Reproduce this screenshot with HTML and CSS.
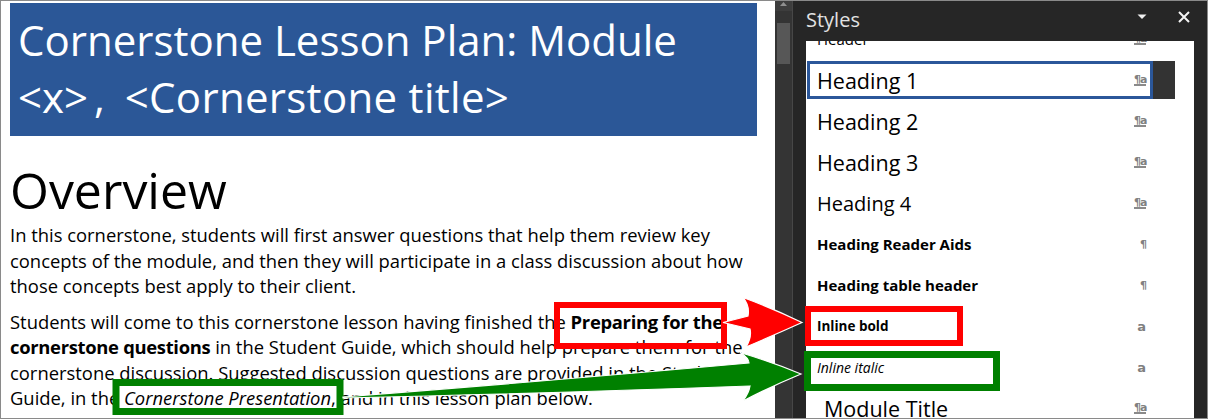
FILE: index.html
```html
<!DOCTYPE html>
<html lang="en">
<head>
<meta charset="utf-8">
<title>Styles</title>
<link rel="stylesheet" href="styles.css">
</head>
<body>
<div class="frame">
  <main class="doc">
    <div class="banner">
      <h1 class="title">Cornerstone Lesson Plan: Module<br><span class="ph-x">&lt;x&gt;</span>, <span class="ph-t">&lt;Cornerstone title&gt;</span></h1>
    </div>
    <h2 class="overview">Overview</h2>
    <p class="para">In this cornerstone, students will first answer questions that help them review key<br>concepts of the module, and then they will participate in a class discussion about how<br>those concepts best apply to their client.</p>
    <p class="para">Students will come to this cornerstone lesson having finished the <strong>Preparing for the</strong><br><strong>cornerstone questions</strong> in the Student Guide, which should help prepare them for the<br>cornerstone discussion. Suggested discussion questions are provided in the Student<br>Guide, in the <em>Cornerstone Presentation</em>, and in this lesson plan below.</p>
  </main>

  <div class="vscroll">
    <div class="vs-up"><svg class="vs-arrow" width="7" height="4" viewBox="0 0 7 4"><polygon points="3.5,0 7,4 0,4"/></svg></div>
    <div class="vs-thumb"></div>
  </div>

  <aside class="pane">
    <header class="pane-head">
      <span class="pane-title">Styles</span>
      <svg class="caret" width="10" height="6" viewBox="0 0 10 6"><polygon points="0.5,0.5 9.5,0.5 5,5"/></svg>
      <svg class="close" width="12" height="12" viewBox="0 0 12 12"><path d="M1 1 L11 11 M11 1 L1 11"/></svg>
    </header>
    <div class="pane-body">
      <ul class="styles">
        <li class="row"><div class="item"><span class="name s-header">Header</span><span class="ico pa">¶a</span></div><div class="drop"></div></li>
        <li class="row sel"><div class="item"><span class="name s-h1">Heading 1</span><span class="ico pa">¶a</span></div><div class="drop"></div></li>
        <li class="row"><div class="item"><span class="name s-h1">Heading 2</span><span class="ico pa">¶a</span></div><div class="drop"></div></li>
        <li class="row"><div class="item"><span class="name s-h1">Heading 3</span><span class="ico pa">¶a</span></div><div class="drop"></div></li>
        <li class="row"><div class="item"><span class="name s-h4">Heading 4</span><span class="ico pa">¶a</span></div><div class="drop"></div></li>
        <li class="row"><div class="item"><span class="name s-bold">Heading Reader Aids</span><span class="ico p">¶</span></div><div class="drop"></div></li>
        <li class="row"><div class="item"><span class="name s-bold">Heading table header</span><span class="ico p">¶</span></div><div class="drop"></div></li>
        <li class="row"><div class="item"><span class="name s-ib">Inline bold</span><span class="ico a">a</span></div><div class="drop"></div></li>
        <li class="row"><div class="item"><span class="name s-ii">Inline italic</span><span class="ico a">a</span></div><div class="drop"></div></li>
        <li class="row"><div class="item"><span class="name s-mt">Module Title</span><span class="ico pa">¶a</span></div><div class="drop"></div></li>
      </ul>
    </div>
  </aside>

  <svg class="annot" width="1208" height="419" viewBox="0 0 1208 419">
    <rect class="box-red" x="557" y="305" width="167" height="41"/>
    <rect class="box-red" x="808" y="309" width="152" height="34"/>
    <rect class="box-green" x="116" y="382.5" width="224" height="29"/>
    <rect class="box-green" x="807.5" y="354.5" width="189" height="33"/>
    <path class="arrow-red" d="M723,322.5 L748,316 Q750,306 743,297.5 Q772,308 802,322.5 Q772,336 746,347 Q752,337 750,329 Z"/>
    <path class="arrow-green" d="M343,397 Q560,380 749,363 Q749,358 740,352.5 Q772,362 801,374 Q772,386 743,401 Q749,393 750,386 Q560,393 343,398 Z"/>
  </svg>
</div>
</body>
</html>
```

FILE: styles.css
```css
html, body {
  margin: 0;
  padding: 0;
  background: #ffffff;
}

.frame {
  position: relative;
  width: 1208px;
  height: 419px;
  box-sizing: border-box;
  border: 1px solid #8a8a8a;
  display: flex;
  overflow: hidden;
  font-family: "Open Sans", "Noto Sans", sans-serif;
}

/* ---------- document ---------- */
.doc {
  width: 774px;
  flex: none;
  box-sizing: border-box;
  padding: 2px 18px 0 9px;
  background: #ffffff;
  overflow: hidden;
  color: #000;
}

.banner {
  background: #2b5797;
  padding: 8px 8px 11px 8px;
}

.title {
  margin: 0;
  color: #ffffff;
  font-weight: 400;
  font-size: 42px;
  line-height: 57px;
  white-space: nowrap;
}

.ph-x { margin-right: 6px; }
.ph-t { margin-left: 9px; letter-spacing: 0.3px; }

.overview {
  margin: 29px 0 0 0;
  font-weight: 400;
  font-size: 50px;
  line-height: 50px;
}

.para {
  margin: 7px 0 0 0;
  font-size: 18.4px;
  line-height: 25.5px;
  white-space: nowrap;
}

.para + .para {
  margin-top: 10px;
}

.para strong { font-weight: 700; letter-spacing: -0.3px; }
.para em { font-style: italic; }

/* ---------- scrollbar ---------- */
.vscroll {
  width: 17px;
  flex: none;
  background: #343434;
  border-right: 1px solid #474747;
}

.vs-up {
  height: 10px;
  background: #3d3d3d;
  display: flex;
  justify-content: center;
  padding-top: 1px;
  box-sizing: border-box;
}

.vs-arrow { fill: #8f8f8f; display: block; }

.vs-thumb {
  margin: 12px 2px 0 2px;
  height: 41px;
  background: #575757;
}

/* ---------- styles pane ---------- */
.pane {
  flex: 1;
  display: flex;
  flex-direction: column;
  background: #262626;
}

.pane-head {
  height: 40px;
  flex: none;
  display: flex;
  align-items: center;
  padding-left: 13px;
}

.pane-title {
  flex: 1;
  color: #e2e2e2;
  font-size: 20px;
  margin-bottom: 3px;
}

.caret {
  fill: #f0f0f0;
  margin: 0 31px 8px 0;
  display: block;
}

.close {
  stroke: #f4f4f4;
  stroke-width: 2;
  fill: none;
  margin: 0 17px 8px 0;
  display: block;
}

.pane-body {
  flex: 1;
  margin: 0 13px;
  background: #ffffff;
  overflow: hidden;
}

.styles {
  list-style: none;
  margin: -22px 0 0 0;
  padding: 0;
}

.row {
  height: 41px;
  box-sizing: border-box;
  padding: 1px 0 0 1px;
  display: flex;
}

.item {
  width: 346px;
  height: 38px;
  box-sizing: border-box;
  border: 3px solid transparent;
  display: flex;
  align-items: center;
  padding: 0 4px 0 7px;
}

.drop {
  width: 22px;
  height: 38px;
}

.row.sel .item { border-color: #2b579a; }
.row.sel .drop { background: #333333; }

.name {
  flex: 1;
  white-space: nowrap;
  color: #000;
}

.s-header { font-size: 15px; }
.s-h1 { font-size: 21.5px; font-weight: 500; }
.s-h4 { font-size: 20px; font-weight: 500; }
.s-bold { font-size: 15px; font-weight: 700; }
.s-ib { font-size: 13.5px; font-weight: 700; }
.s-ii { font-size: 14px; font-style: italic; }
.s-mt { font-size: 21.5px; font-weight: 500; padding-left: 7px; }

.ico {
  width: 12px;
  flex: none;
  color: #808080;
  font-family: "DejaVu Sans", "Liberation Sans", sans-serif;
  font-weight: 700;
  font-size: 11px;
  line-height: 9px;
  letter-spacing: -1px;
  text-align: right;
}

.ico.pa {
  text-align: left;
  border-bottom: 2px solid #8a8a8a;
}

.ico.a {
  font-size: 13px;
  letter-spacing: 0;
}

/* ---------- annotation overlay ---------- */
.annot {
  position: absolute;
  left: -1px;
  top: -1px;
  pointer-events: none;
}

.box-red {
  fill: none;
  stroke: #ff0000;
  stroke-width: 6;
}

.box-green {
  fill: none;
  stroke: #008000;
  stroke-width: 7;
}

.arrow-red {
  fill: #ff0000;
  stroke: #ffffff;
  stroke-width: 1.2;
}

.arrow-green {
  fill: #008000;
  stroke: #ffffff;
  stroke-width: 1.2;
}
```
